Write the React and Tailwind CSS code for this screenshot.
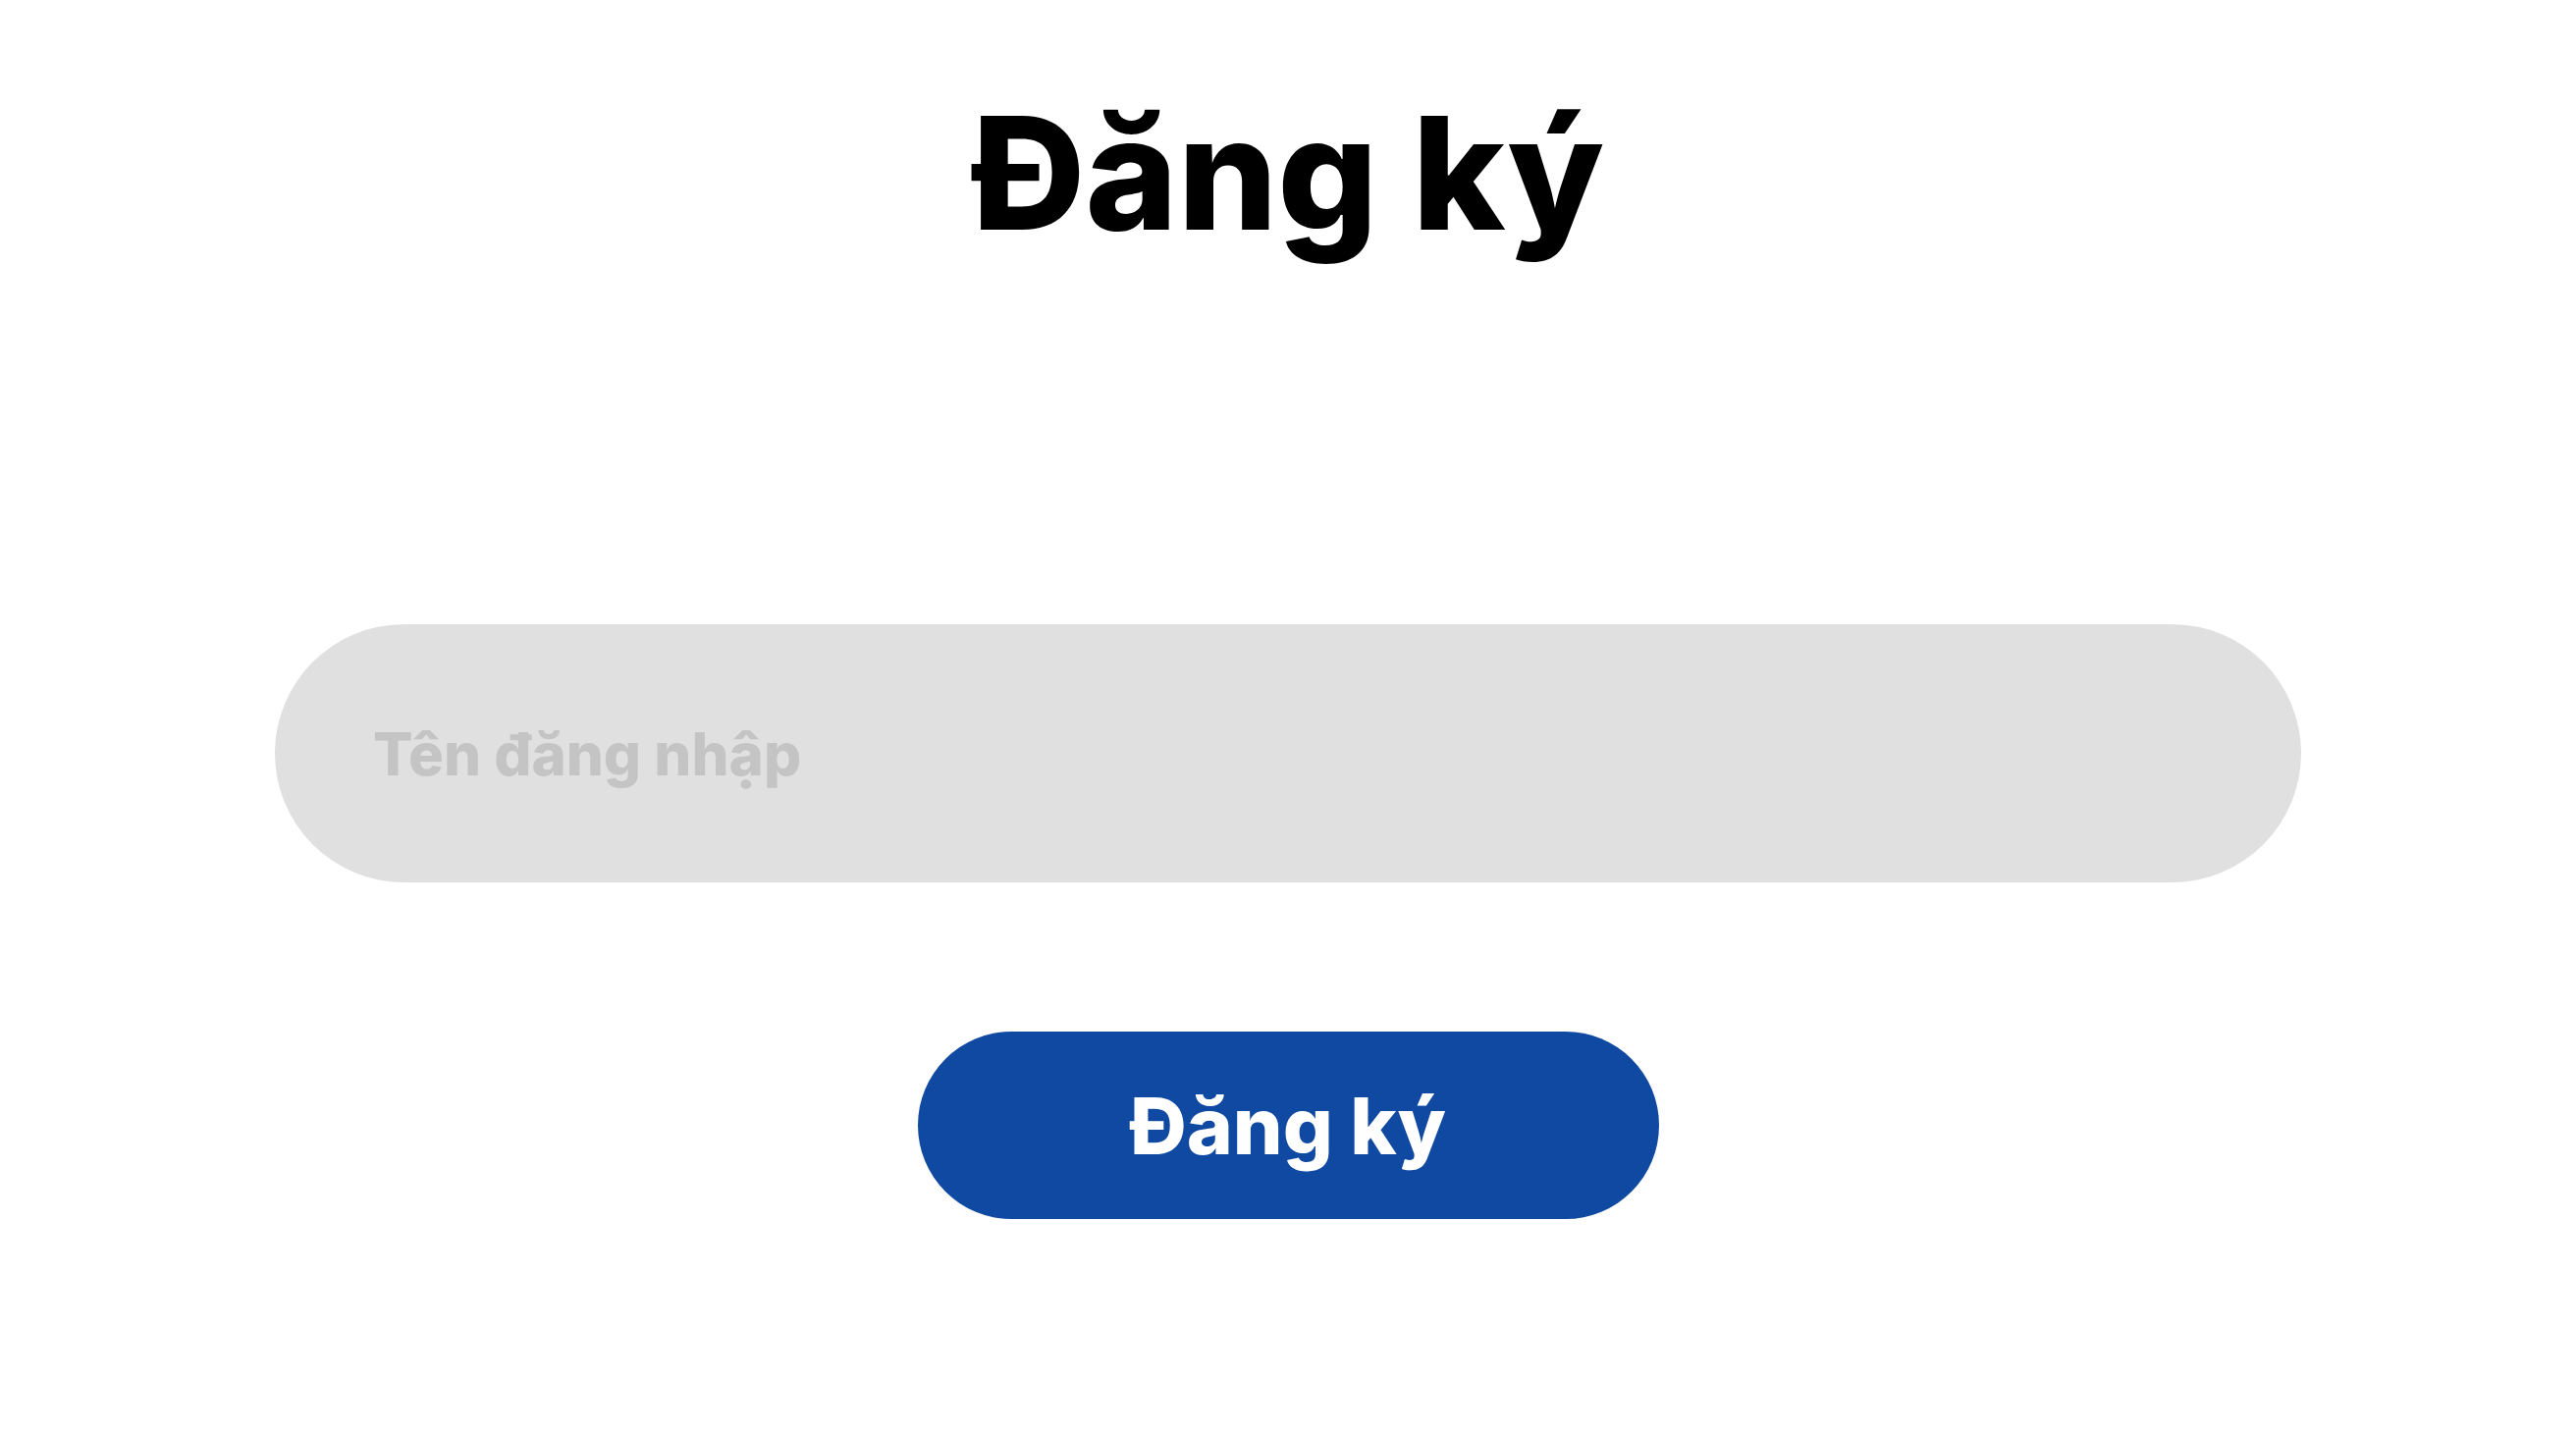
export default function App() {
  return (
    <div className="min-h-screen bg-white font-['Inter',sans-serif] flex flex-col items-center">
      <h1 className="mt-[96px] h-[160px] text-[160px] leading-none font-extrabold text-black">Đăng ký</h1>
      <input
        type="text"
        placeholder="Tên đăng nhập"
        className="mt-[380px] w-[2064px] h-[263px] rounded-full bg-[#e0e0e0] pl-[100px] pr-[100px] text-[60px] font-extrabold text-black placeholder:text-[#c4c4c4] outline-none"
      />
      <button className="mt-[152px] w-[755px] h-[191px] rounded-full bg-[#0f49a1] text-white text-[80px] font-extrabold leading-none">
        Đăng ký
      </button>
    </div>
  );
}
